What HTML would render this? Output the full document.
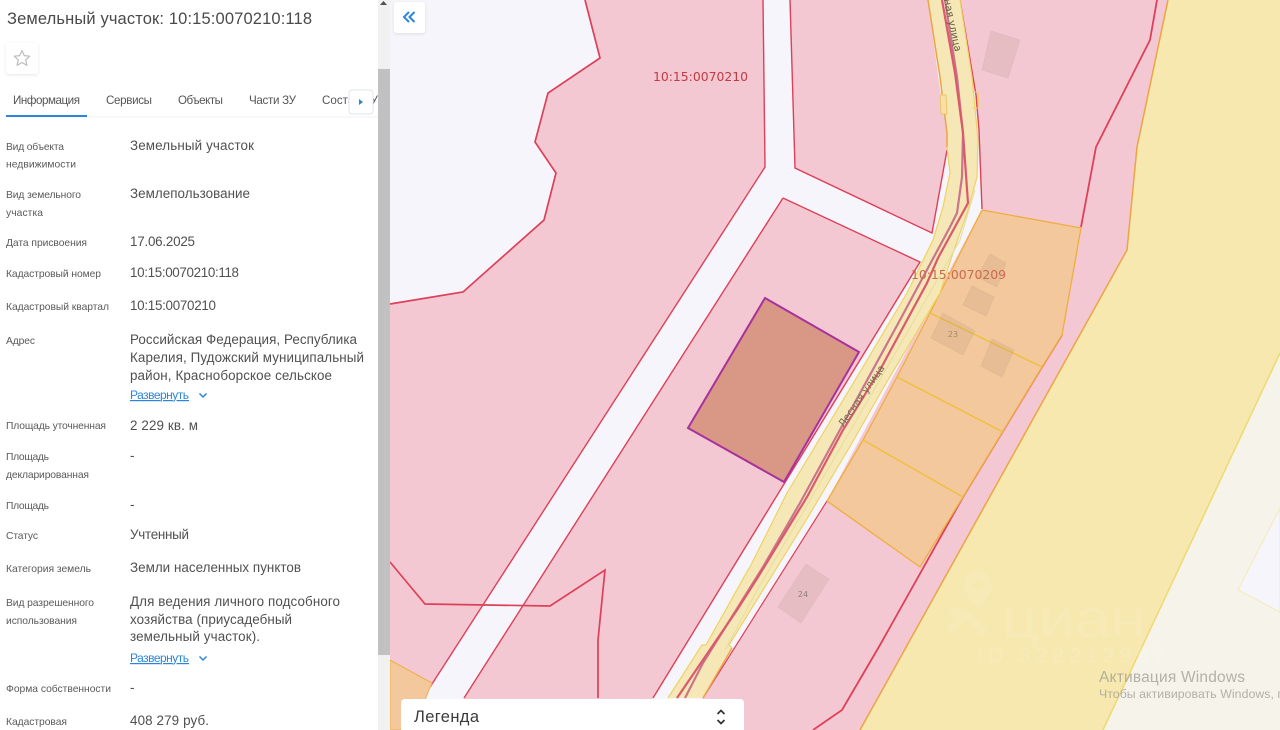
<!DOCTYPE html>
<html lang="ru">
<head>
<meta charset="utf-8">
<title>Земельный участок: 10:15:0070210:118</title>
<style>
html,body{margin:0;padding:0;background:#fff;width:1280px;height:730px;overflow:hidden}
svg{display:block}
text{font-family:"Liberation Sans","Noto Sans CJK SC",sans-serif}
.l{font-size:10.3px;fill:#5a5a5a}
.v{font-size:13.4px;fill:#505050}
.t{font-size:11.6px;fill:#555}
.a{font-size:12px;fill:#2b85dc;text-decoration:underline}
.m{font-family:"DejaVu Sans",sans-serif;font-size:12.4px}
</style>
</head>
<body>
<svg width="1280" height="730" viewBox="0 0 1280 730" xmlns="http://www.w3.org/2000/svg">
<defs>
<clipPath id="tabs"><rect x="0" y="85" width="378" height="35"/></clipPath>
<filter id="sh" x="-30%" y="-30%" width="160%" height="160%"><feDropShadow dx="0" dy="1" stdDeviation="1.5" flood-color="#000" flood-opacity=".1"/></filter>
</defs>

<!-- map base -->
<rect x="378" y="0" width="902" height="730" fill="#f6f5fb"/>

<!-- yellow and beige zones -->
<polygon points="1168,0 1280,0 1280,353 1103,730 860,730 1127,250 1137,147" fill="#f6e8ae"/>
<polygon points="1280,353 1103,730 1280,730" fill="#f6f3ea"/>
<polyline points="1280,353 1103,730" fill="none" stroke="#eeda70" stroke-width="1.5"/>
<polygon points="1280,508 1238,590 1280,612" fill="#f6f5fb" stroke="#f5ebb8" stroke-width="1"/>

<!-- pink parcels -->
<polygon points="585,0 600,58 548,93 535,142 556,173 544,220 463,292 390,304 390,730 402,730 423,698 765,167 763,0" fill="#f4c8d3"/>
<polygon points="790,0 795,168 932,233 947,150 948,130 940,90 928,0" fill="#f4c8d3"/>
<polygon points="783,198 920,262 653,698 633,730 444,730 464,698" fill="#f4c8d3"/>
<polygon points="960,0 976,95 979,130 982,209 827,501 703,698 683,730 860,730 1127,250 1137,147 1168,0" fill="#f4c8d3"/>

<!-- parcel outlines -->
<g fill="none" stroke="#dd4058" stroke-width="1.4">
<polyline points="585,0 600,58 548,93 535,142 556,173 544,220 463,292 390,304" stroke-width="1.7"/>
<polyline points="763,0 765,167 423,698"/>
<polyline points="790,0 795,168 932,233 947,150"/>
<polyline points="783,198 464,698"/>
<polyline points="783,198 920,262 653,698"/>
<polyline points="827,501 703,698" stroke-width="1.2"/>
<polyline points="390,562 425,604 550,606 605,570 598,640 598,698" stroke-width="1.7"/>
<polyline points="1157,0 1150,40 1096,147 1081,227" stroke-width="1.8"/>
<polyline points="1062,335 1042,367 963,497 880,645 842,710 813,730" stroke-width="1.8"/>
<polyline points="960,0 976,95 979,130 982,209"/>
</g>

<!-- bottom-left orange -->
<polygon points="390,660 432,683 412,730 390,730" fill="#f2c89c" stroke="#efb04c" stroke-width="1"/>

<!-- orange parcels -->
<polygon points="982,210 1081,228 1062,335 1042,367 963,497 920,567 827,501 863,440 897,377 930,313" fill="#f2c89c" stroke="#efae3e" stroke-width="1.3"/>
<g stroke="#f0bf3e" stroke-width="1.5" fill="none">
<line x1="930" y1="313" x2="1042" y2="367"/>
<line x1="897" y1="377" x2="1003" y2="432"/>
<line x1="863" y1="440" x2="963" y2="497"/>
</g>
<polyline points="1168,0 1137,147 1127,250 860,730" fill="none" stroke="#eca444" stroke-width="1.5"/>

<!-- buildings -->
<g fill="#a08070" fill-opacity=".15" stroke="#a08070" stroke-opacity=".1">
<polygon points="991,31 1020,40 1008,78 982,70"/>
<polygon points="806,564 829,579 801,623 778,607"/>
<polygon points="943,313 975,331 963,355 931,338"/>
<polygon points="990,254 1006,263 997,287 977,277"/>
<polygon points="972,286 994,297 986,316 963,305"/>
<polygon points="992,339 1014,350 1002,377 981,366"/>
</g>
<text x="803" y="597" font-size="8" fill="#8d7a80" text-anchor="middle" style="font-family:'DejaVu Sans',sans-serif">24</text>
<text x="953" y="337" font-size="8" fill="#a58a6a" text-anchor="middle" style="font-family:'DejaVu Sans',sans-serif">23</text>

<!-- selected parcel -->
<polygon points="765,298 859,352 784,482 688,428" fill="#d99785" stroke="#a8329c" stroke-width="2"/>

<!-- street -->
<polygon points="928,0 940,77 947,133 947,147 950,173 943,207 933,240 907,293 860,372 787,493 750,567 748,570 706,645 702,645 668,698 703,698 732,648 729,645 805,522 808,517 852,443 885,385 940,293 953,253 967,213 977,177 978,140 972,77 960,0" fill="#f6e8b6"/>
<g fill="none">
<polyline points="928,0 940,77 947,133 947,147" stroke="#eca444" stroke-width="1.5"/>
<polyline points="947,147 950,173 943,207 933,240 907,293 860,372 787,493 750,567 748,570 706,645 702,645 668,698" stroke="#eed264" stroke-width="1.2"/>
<polyline points="960,0 972,77 978,140 977,177 967,213 953,253 940,293 885,385 852,443 808,517 805,522 729,645 732,648" stroke="#eed264" stroke-width="1.2"/>
<polyline points="732,648 703,698" stroke="#eca444" stroke-width="1.4"/>
<polyline points="975,190 960,240 900,345 810,500 760,585 725,650" stroke="#e5dd9c" stroke-width="1"/>
<polyline points="945,0 957,77 963,133 962,177 957,213 950,227 900,320 800,503 763,567 703,663 685,698" stroke="#c9768c" stroke-width="2.2"/>
<polyline points="942,0 955,73 963,133 968,203 938,258 927,283 880,370 843,430 807,497 758,577 737,610 677,698" stroke="#da5a6c" stroke-width="2.2"/>
<polyline points="940,95 946,95 947,114 941,114 940,95" stroke="#eec468" fill="#f6e0a8" stroke-width="1"/>
<polyline points="972,92 978,92 979,108 973,108" stroke="#eed264" stroke-width="1"/>
</g>
<text transform="translate(885,368) rotate(-55)" font-size="10" fill="#6d6e4e" text-anchor="end" style="font-family:'DejaVu Sans',sans-serif">Лесная улица</text>
<text transform="translate(955,52) rotate(78)" font-size="10" fill="#5e6048" text-anchor="end" style="font-family:'DejaVu Sans',sans-serif">Лесная улица</text>

<!-- map labels -->
<text class="m" x="653" y="81" fill="#c23a42" textLength="95" lengthAdjust="spacing">10:15:0070210</text>
<text class="m" x="911" y="279" fill="#cc6a4d" textLength="95" lengthAdjust="spacing">10:15:0070209</text>

<!-- watermark -->
<g opacity=".11">
<path fill="#fff" d="M978 571a14 14 0 0 1 14 14c0 9-9 17-14 24c-5-7-14-15-14-24a14 14 0 0 1 14-14zm0 9a5 5 0 1 0 0 10a5 5 0 0 0 0-10z" fill-rule="evenodd"/>
<path d="M949 631l17-18 18 21M960 608l-8 8" fill="none" stroke="#fff" stroke-width="8"/>
<text fill="#fff" x="1002" y="637" font-size="53" textLength="144" lengthAdjust="spacingAndGlyphs">циан</text>
<text fill="#fff" x="977" y="663" font-size="22" font-weight="700" textLength="188" lengthAdjust="spacing">ID 322212957</text>
</g>

<!-- windows activation -->
<text x="1099" y="682" font-size="15.500" fill="#a8a59a" fill-opacity=".85" textLength="146" lengthAdjust="spacing">Активация Windows</text>
<text x="1099" y="698" font-size="12.300" fill="#a8a59a" fill-opacity=".85" textLength="192" lengthAdjust="spacing">Чтобы активировать Windows, пе</text>

<!-- collapse button -->
<rect x="394" y="2" width="31" height="31" rx="3" fill="#fff" filter="url(#sh)"/>
<path d="M409 12l-5 5 5 5M414.500 12l-5 5 5 5" fill="none" stroke="#2b85dc" stroke-width="2"/>

<!-- legend -->
<path d="M401 734v-31a4 4 0 0 1 4-4h335a4 4 0 0 1 4 4v31z" fill="#fff"/>
<text x="414" y="722" font-size="16.500" fill="#3a3a3a" textLength="65" lengthAdjust="spacing">Легенда</text>
<path d="M717.500 714l3.500-3.500 3.500 3.500M717.500 720l3.500 3.500 3.500-3.500" fill="none" stroke="#333" stroke-width="1.700"/>

<!-- sidebar -->
<rect x="0" y="0" width="378" height="730" fill="#fff"/>
<rect x="378" y="0" width="12" height="730" fill="#f1f1f1"/>
<rect x="378" y="69" width="12" height="586" fill="#c1c1c1"/>
<polygon points="383.500,1 387,5 380,5" fill="#505050"/>

<text x="7" y="24" font-size="16.500" fill="#4a4a4a" textLength="305" lengthAdjust="spacing">Земельный участок: 10:15:0070210:118</text>

<rect x="6" y="43" width="32" height="31" rx="3" fill="#fff" filter="url(#sh)"/>
<path d="M22 50.500l2.300 5.100 5.500.6-4.100 3.700 1.200 5.400-4.900-2.800-4.900 2.800 1.200-5.400-4.100-3.700 5.500-.6z" fill="none" stroke="#bdbdbd" stroke-width="1.200" stroke-linejoin="round"/>

<g clip-path="url(#tabs)">
<text class="t" x="13" y="104" textLength="67" lengthAdjust="spacing">Информация</text>
<text class="t" x="106" y="104" textLength="46" lengthAdjust="spacing">Сервисы</text>
<text class="t" x="178" y="104" textLength="45" lengthAdjust="spacing">Объекты</text>
<text class="t" x="249" y="104" textLength="47" lengthAdjust="spacing">Части ЗУ</text>
<text class="t" x="322" y="104">Состав ЗУ</text>
</g>
<rect x="6" y="116.500" width="372" height="1" fill="#f0f0f0"/>
<rect x="6" y="115" width="81" height="2" fill="#2b85dc"/>
<rect x="349" y="90" width="24" height="24" rx="3" fill="#fff" stroke="#dfe4ee"/>
<polygon points="359,99 363,102 359,105" fill="#2b85dc"/>

<!-- labels -->
<text class="l" x="6" y="150" textLength="58" lengthAdjust="spacing">Вид объекта</text>
<text class="l" x="6" y="167.500" textLength="70" lengthAdjust="spacing">недвижимости</text>
<text class="l" x="6" y="198" textLength="75" lengthAdjust="spacing">Вид земельного</text>
<text class="l" x="6" y="216" textLength="37" lengthAdjust="spacing">участка</text>
<text class="l" x="6" y="246" textLength="81" lengthAdjust="spacing">Дата присвоения</text>
<text class="l" x="6" y="277" textLength="95" lengthAdjust="spacing">Кадастровый номер</text>
<text class="l" x="6" y="310" textLength="103" lengthAdjust="spacing">Кадастровый квартал</text>
<text class="l" x="6" y="344" textLength="29" lengthAdjust="spacing">Адрес</text>
<text class="l" x="6" y="429" textLength="100" lengthAdjust="spacing">Площадь уточненная</text>
<text class="l" x="6" y="460" textLength="43" lengthAdjust="spacing">Площадь</text>
<text class="l" x="6" y="478" textLength="83" lengthAdjust="spacing">декларированная</text>
<text class="l" x="6" y="509" textLength="43" lengthAdjust="spacing">Площадь</text>
<text class="l" x="6" y="539" textLength="32" lengthAdjust="spacing">Статус</text>
<text class="l" x="6" y="572" textLength="85" lengthAdjust="spacing">Категория земель</text>
<text class="l" x="6" y="606" textLength="88" lengthAdjust="spacing">Вид разрешенного</text>
<text class="l" x="6" y="624" textLength="71" lengthAdjust="spacing">использования</text>
<text class="l" x="6" y="692" textLength="105" lengthAdjust="spacing">Форма собственности</text>
<text class="l" x="6" y="725" textLength="61" lengthAdjust="spacing">Кадастровая</text>

<!-- values -->
<text class="v" x="130" y="150" textLength="124" lengthAdjust="spacing">Земельный участок</text>
<text class="v" x="130" y="198" textLength="120" lengthAdjust="spacing">Землепользование</text>
<text class="v" x="130" y="246" textLength="65" lengthAdjust="spacing">17.06.2025</text>
<text class="v" x="130" y="277" textLength="109" lengthAdjust="spacing">10:15:0070210:118</text>
<text class="v" x="130" y="310" textLength="86" lengthAdjust="spacing">10:15:0070210</text>
<text class="v" x="130" y="344" textLength="227" lengthAdjust="spacing">Российская Федерация, Республика</text>
<text class="v" x="130" y="362" textLength="234" lengthAdjust="spacing">Карелия, Пудожский муниципальный</text>
<text class="v" x="130" y="380" textLength="202" lengthAdjust="spacing">район, Красноборское сельское</text>
<text class="a" x="130" y="399" textLength="59" lengthAdjust="spacing">Развернуть</text>
<path d="M199.500 393.500l3.500 3.500 3.500-3.500" fill="none" stroke="#2b85dc" stroke-width="1.500"/>
<text class="v" x="130" y="430" textLength="68" lengthAdjust="spacing">2 229 кв. м</text>
<text class="v" x="130" y="460">-</text>
<text class="v" x="130" y="509">-</text>
<text class="v" x="130" y="539" textLength="59" lengthAdjust="spacing">Учтенный</text>
<text class="v" x="130" y="572" textLength="171" lengthAdjust="spacing">Земли населенных пунктов</text>
<text class="v" x="130" y="606" textLength="210" lengthAdjust="spacing">Для ведения личного подсобного</text>
<text class="v" x="130" y="624" textLength="162" lengthAdjust="spacing">хозяйства (приусадебный</text>
<text class="v" x="130" y="641" textLength="130" lengthAdjust="spacing">земельный участок).</text>
<text class="a" x="130" y="662" textLength="59" lengthAdjust="spacing">Развернуть</text>
<path d="M199.500 656.500l3.500 3.500 3.500-3.500" fill="none" stroke="#2b85dc" stroke-width="1.500"/>
<text class="v" x="130" y="692">-</text>
<text class="v" x="130" y="725" textLength="79" lengthAdjust="spacing">408 279 руб.</text>
</svg>
</body>
</html>
